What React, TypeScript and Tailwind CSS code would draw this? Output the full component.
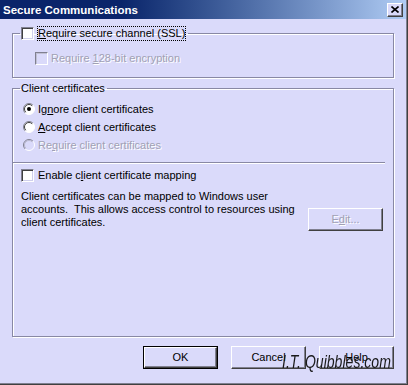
import React from 'react';

type Kid = { children?: React.ReactNode };

const Check: React.FC<{ disabled?: boolean }> = ({ disabled }) => (
  <span
    className={
      disabled
        ? 'inline-block w-[13px] h-[13px] shrink-0 bg-[#dadafa] border border-t-[#808090] border-l-[#808090] border-r-white border-b-white shadow-[inset_1px_1px_0_#c0c0d4]'
        : 'inline-block w-[13px] h-[13px] shrink-0 bg-white border border-t-[#808090] border-l-[#808090] border-r-white border-b-white shadow-[inset_1px_1px_0_#404040,inset_-1px_-1px_0_#d0d0ec]'
    }
  />
);

const Radio: React.FC<{ checked?: boolean; disabled?: boolean }> = ({ checked, disabled }) => (
  <svg width="12" height="12" viewBox="0 0 12 12" className="shrink-0">
    <circle cx="6" cy="6" r="5.5" fill={disabled ? '#dadafa' : '#ffffff'} />
    <path d="M2.1 9.9 A5.5 5.5 0 0 1 9.9 2.1" fill="none" stroke="#808090" strokeWidth="1" />
    <path d="M9.9 2.1 A5.5 5.5 0 0 1 2.1 9.9" fill="none" stroke="#ffffff" strokeWidth="1" />
    <path d="M2.8 9.2 A4.5 4.5 0 0 1 9.2 2.8" fill="none" stroke={disabled ? '#b8b8cc' : '#404040'} strokeWidth="1" />
    {checked && <circle cx="6" cy="6" r="2" fill="#000000" />}
  </svg>
);

const Btn: React.FC<Kid & { def?: boolean; disabled?: boolean }> = ({ children, def, disabled }) => (
  <div className={def ? 'w-[75px] h-[23px] border border-black' : 'w-[75px] h-[23px]'}>
    <div
      className={
        disabled
          ? 'w-full h-full flex items-center justify-center bg-[#dadafa] border border-t-white border-l-white border-r-[#404040] border-b-[#404040] shadow-[inset_-1px_-1px_0_#808090] text-[#a0a0b4] [text-shadow:1px_1px_0_#ffffff]'
          : 'w-full h-full flex items-center justify-center bg-[#dadafa] border border-t-white border-l-white border-r-[#404040] border-b-[#404040] shadow-[inset_-1px_-1px_0_#808090] text-black'
      }
    >
      {children}
    </div>
  </div>
);

const Dim: React.FC<Kid> = ({ children }) => (
  <span className="text-[#a0a0b4] [text-shadow:1px_1px_0_#ffffff]">{children}</span>
);

export default function App() {
  return (
    <div className="relative w-[408px] h-[385px] bg-[#dadafa] border-r border-b border-[#404040] shadow-[inset_-1px_-1px_0_#808090] overflow-hidden font-['Liberation_Sans',Arial,sans-serif] text-[11px] leading-[13px] text-black">
      {/* title bar */}
      <div className="h-[19px] mr-[1px] flex items-center justify-between bg-linear-to-r from-[#0a246a] via-[#0a246a] via-30% to-[#b0ccf4]">
        <span className="pl-[3px] pt-[1px] text-white font-bold text-[11.5px]">Secure Communications</span>
        <div className="w-[16px] h-[14px] mr-[3px] flex items-center justify-center bg-[#dadafa] border border-t-white border-l-white border-r-[#404040] border-b-[#404040] shadow-[inset_-1px_-1px_0_#808090]">
          <svg width="8" height="7" viewBox="0 0 8 7">
            <path d="M0.5 0.5 L7.5 6.5 M7.5 0.5 L0.5 6.5" stroke="#000" strokeWidth="1.6" />
          </svg>
        </div>
      </div>

      <div className="pl-[12px]">
        {/* SSL group */}
        <fieldset className="mt-[7px] w-[382px] p-0 border border-[#8888a4] shadow-[inset_1px_1px_0_#ffffff,1px_1px_0_#ffffff] pb-[11px]">
          <legend className="ml-[7px] pl-[1px] pr-[2px] h-[15px] flex items-center">
            <Check />
            <span className="ml-[3px] h-[15px] px-0 border border-dotted border-black flex items-center">
              <span><u>R</u>equire secure channel (SSL)</span>
            </span>
          </legend>
          <div className="mt-[10px] h-[15px] pl-[22px] flex items-center">
            <Check disabled />
            <span className="ml-[3px]">
              <Dim>
                Require <u>1</u>28-bit encryption
              </Dim>
            </span>
          </div>
        </fieldset>

        {/* client certificates group */}
        <fieldset className="mt-[4px] w-[382px] p-0 border border-[#8888a4] shadow-[inset_1px_1px_0_#ffffff,1px_1px_0_#ffffff] pb-[105px]">
          <legend className="ml-[7px] pl-[1px] pr-[2px] h-[13px] leading-[13px]">Client certificates</legend>
          <div className="mt-[5px] pl-[10px] flex flex-col">
            <div className="h-[18px] flex items-center">
              <Radio checked />
              <span className="ml-[3px]">
                Ig<u>n</u>ore client certificates
              </span>
            </div>
            <div className="h-[18px] flex items-center">
              <Radio />
              <span className="ml-[3px]">
                <u>A</u>ccept client certificates
              </span>
            </div>
            <div className="h-[18px] flex items-center">
              <Radio disabled />
              <span className="ml-[3px]">
                <Dim>
                  Re<u>q</u>uire client certificates
                </Dim>
              </span>
            </div>
          </div>
          <div className="mt-[8px] w-[372px] h-[2px] border-t border-[#8888a4] border-b border-b-white" />
          <div className="mt-[4px] h-[15px] pl-[8px] flex items-center">
            <Check />
            <span className="ml-[4px]">
              Enable c<u>l</u>ient certificate mapping
            </span>
          </div>
          <div className="mt-[7px] pl-[8px] pr-[10px] flex items-start justify-between">
            <p className="leading-[13px] whitespace-pre">
              {'Client certificates can be mapped to Windows user\naccounts.  This allows access control to resources using\nclient certificates.'}
            </p>
            <div className="mt-[18px]">
              <Btn disabled>
                <span>
                  E<u>d</u>it...
                </span>
              </Btn>
            </div>
          </div>
        </fieldset>

        {/* dialog buttons */}
        <div className="mt-[9px] w-[382px] flex justify-end gap-[13px]">
          <Btn def>OK</Btn>
          <Btn>Cancel</Btn>
          <Btn>Help</Btn>
        </div>
      </div>

      {/* watermark */}
      <div className="absolute left-[282px] top-[352px] whitespace-nowrap text-[18.5px] leading-[20px] italic text-[#1a1a1a] origin-left scale-x-[0.76] font-['Liberation_Sans',sans-serif]">
        I.T. Quibbles.com
      </div>
    </div>
  );
}
